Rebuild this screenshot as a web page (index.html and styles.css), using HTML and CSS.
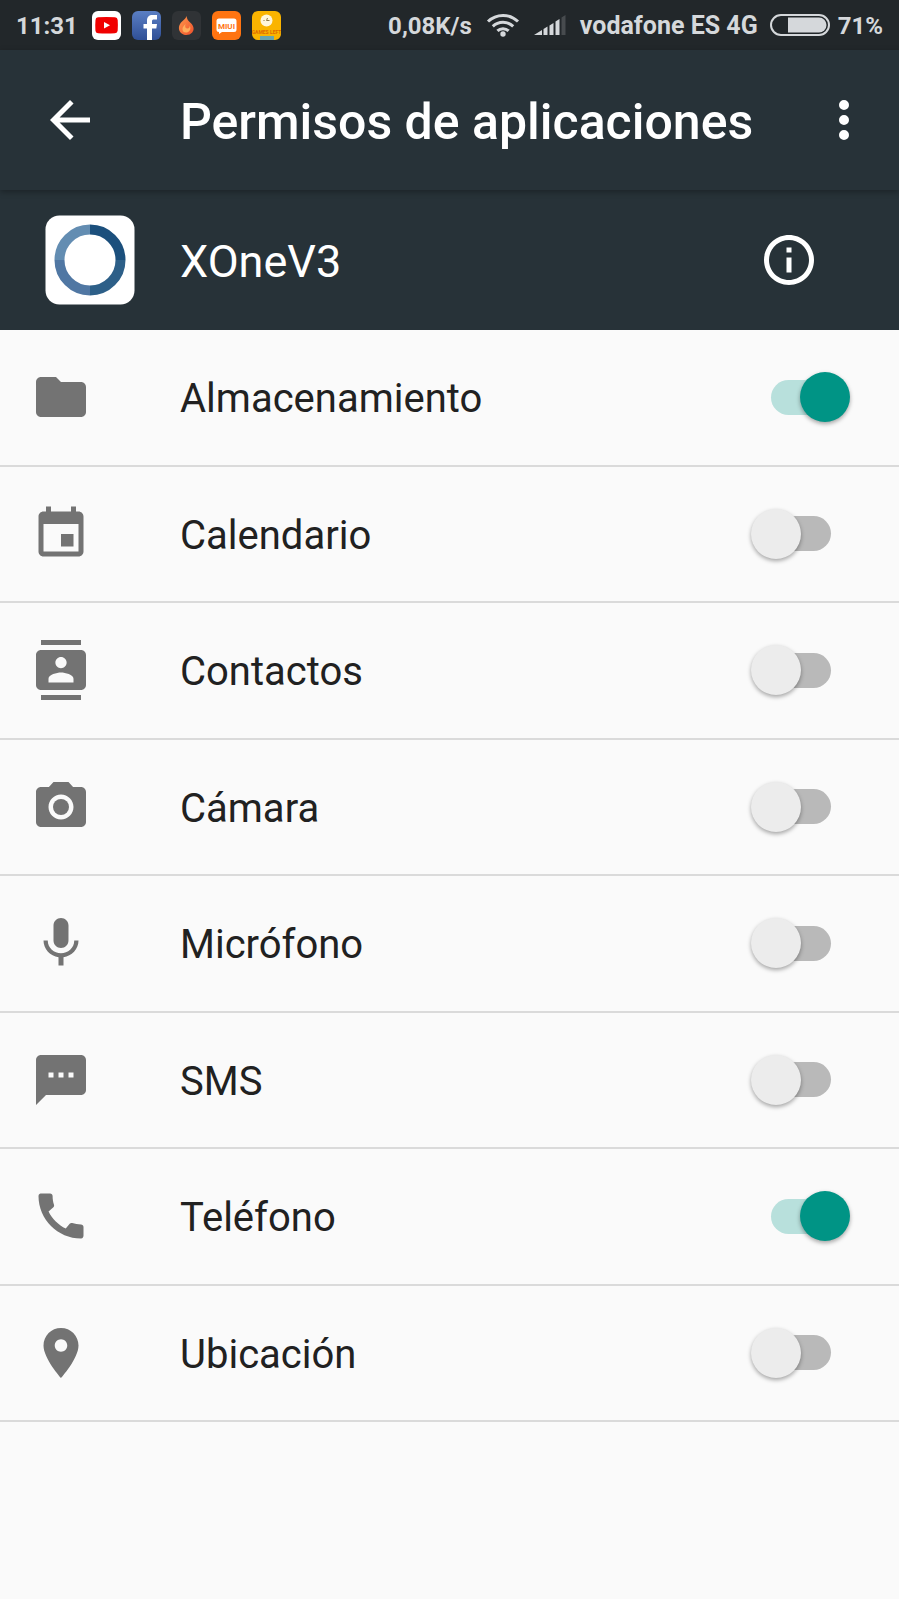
FILE: index.html
```html
<!DOCTYPE html>
<html lang="es">
<head>
<meta charset="utf-8">
<meta name="viewport" content="width=device-width, initial-scale=1">
<title>Permisos de aplicaciones</title>
<link rel="stylesheet" href="styles.css">
</head>
<body>
<div class="status-bar">
  <span class="clock">11:31</span>
  <div class="notifications">
    <svg class="notif" viewBox="0 0 29 29" aria-label="YouTube"><rect width="29" height="29" rx="6" fill="#fff"/><path d="M3.500 9q0-2.500 2.500-2.700 8.500-.6 17 0 2.500.2 2.700 2.700.4 5.500 0 10.500-.2 2.500-2.700 2.700-8.500.6-17 0Q3.500 22 3.400 19.500q-.4-5 .1-10.500z" fill="#f00000"/><path d="M12 11v6.500l6-3.200z" fill="#fff"/></svg>
    <svg class="notif" viewBox="0 0 29 29" aria-label="Facebook"><defs><linearGradient id="fb" x1="0" y1="0" x2="0" y2="1"><stop offset="0" stop-color="#5b7fc4"/><stop offset="1" stop-color="#2f4f96"/></linearGradient></defs><rect width="29" height="29" rx="6" fill="url(#fb)"/><path d="M15 29V17.500h-3.500V13H15V9.500C15 6 17 4 20.500 4H25v4.500h-3c-1.500 0-2 .6-2 2V13h5l-.7 4.500H20V29z" fill="#fff"/></svg>
    <svg class="notif" viewBox="0 0 29 29"><defs><linearGradient id="fl" x1="0" y1="0" x2="1" y2="1"><stop offset="0" stop-color="#ff9a4c"/><stop offset="1" stop-color="#f0502c"/></linearGradient></defs><rect width="29" height="29" rx="6" fill="#303336"/><path d="M14.500 5c.2 3 2 5 4.200 7 3 2.800 4 6.500 1.500 9.500-2.800 3.200-8.200 3.300-11.200.5-3-3-2.500-7.500 0-10.500 2-2.400 4.800-3.500 5.500-6.500z" fill="url(#fl)"/><path d="M13.500 13c-1 3 .2 4.500 2 4.500 1.500 0 2.300-1.300 2.200-3 1.300 2.500.8 6-2.700 7-3 .6-5-1.500-4.500-4 .3-1.800 1.600-3 3-4.500z" fill="#ffae5c"/></svg>
    <svg class="notif" viewBox="0 0 29 29"><rect width="29" height="29" rx="6" fill="#ff7411"/><path d="M7 7.500h15a2.500 2.500 0 0 1 2.500 2.500v8.500a2.500 2.500 0 0 1-2.500 2.500H10l-3 2v-2a2.500 2.500 0 0 1-2.500-2.500V10A2.500 2.500 0 0 1 7 7.500z" fill="#fff"/><text class="miui" x="14.500" y="17.500" text-anchor="middle">MIUI</text></svg>
    <svg class="notif" viewBox="0 0 29 29"><defs><clipPath id="gc"><rect width="29" height="29" rx="6"/></clipPath></defs><g clip-path="url(#gc)"><rect width="29" height="29" fill="#fab400"/><path d="M8 25h14v4H8z" fill="#68a5ad"/><circle cx="14.500" cy="9.500" r="6" fill="#fff6dc"/><path d="M15.500 7l-1 2.500h3M11.500 9.500h1" fill="none" stroke="#8f7a4a"/><text class="games" x="14.500" y="22.500" text-anchor="middle">GAMES LEFT</text></g></svg>
  </div>
  <span class="speed">0,08K/s</span>
  <svg class="wifi" viewBox="0 0 34 26" aria-label="Wi-Fi"><g fill="none" stroke="#d5d8db" stroke-width="3"><path d="M2 9.500a21.500 21.500 0 0 1 30 0"/><path d="M6.800 14.300a14.700 14.700 0 0 1 20.400 0"/><path d="M11.400 18.900a8.200 8.200 0 0 1 11.200 0"/></g><circle cx="17" cy="22" r="2.700" fill="#d5d8db"/></svg>
  <svg class="signal" viewBox="0 0 32 22" aria-label="Cobertura"><path d="M0 21l8-5v5zM9.500 15l4-2.500V21h-4zM15.500 11.500l4-2.500v12h-4zM21.500 7.500l4-2.500v16h-4z" fill="#d5d8db"/><path d="M27.500 3.500l4-2.500v20h-4z" fill="#474b4e"/></svg>
  <span class="carrier">vodafone ES 4G</span>
  <svg class="battery" viewBox="0 0 60 22" aria-label="Batería"><rect x="1" y="1" width="58" height="20" rx="10" fill="none" stroke="#d5d8db" stroke-width="2"/><path d="M18 3.500h31a7.500 7.500 0 0 1 0 15H18z" fill="#d5d8db"/></svg>
  <span class="percent">71%</span>
</div>

<header class="app-bar">
  <button class="icon-button" aria-label="Atrás"><svg class="icon" viewBox="0 0 24 24"><path d="M20 11H7.830l5.590-5.590L12 4l-8 8 8 8 1.410-1.410L7.830 13H20z"/></svg></button>
  <h1 class="title">Permisos de aplicaciones</h1>
  <button class="icon-button" aria-label="Más opciones"><svg class="icon" viewBox="0 0 24 24"><path d="M12 8a2 2 0 1 0 0-4 2 2 0 0 0 0 4zm0 2a2 2 0 1 0 0 4 2 2 0 0 0 0-4zm0 6a2 2 0 1 0 0 4 2 2 0 0 0 0-4z"/></svg></button>
</header>

<main>
  <section class="app-row">
    <svg class="app-icon" viewBox="0 0 90 90"><rect x=".5" y=".5" width="89" height="89" rx="14" fill="#fff"/><g fill="none" stroke-width="10"><path d="M45 14.500a30.500 30.500 0 0 1 30.500 30.500" stroke="#1b4f7c"/><path d="M75.500 45A30.500 30.500 0 0 1 45 75.500" stroke="#2d5f88"/><path d="M45 75.500A30.500 30.500 0 0 1 14.500 45" stroke="#5077a3"/><path d="M14.500 45A30.500 30.500 0 0 1 45 14.500" stroke="#638db2"/></g></svg>
    <h2 class="app-name">XOneV3</h2>
    <button class="icon-button" aria-label="Información"><svg class="icon" viewBox="0 0 24 24"><path d="M11 17h2v-6h-2v6zm1-15C6.480 2 2 6.480 2 12s4.480 10 10 10 10-4.480 10-10S17.520 2 12 2zm0 18c-4.410 0-8-3.590-8-8s3.590-8 8-8 8 3.590 8 8-3.590 8-8 8zM11 9h2V7h-2v2z"/></svg></button>
  </section>

  <ul class="permissions">
    <li class="permission"><svg class="icon" viewBox="0 0 24 24"><path d="M10 4H4c-1.100 0-1.990.9-1.990 2L2 18c0 1.100.9 2 2 2h16c1.100 0 2-.9 2-2V8c0-1.100-.9-2-2-2h-8l-2-2z"/></svg><label class="name" for="storage">Almacenamiento</label><input class="switch" type="checkbox" role="switch" id="storage" checked></li>
    <li class="permission"><svg class="icon" viewBox="0 0 24 24"><path d="M17 12h-5v5h5v-5zM16 1v2H8V1H6v2H5c-1.110 0-1.990.9-1.990 2L3 19c0 1.100.89 2 2 2h14c1.100 0 2-.9 2-2V5c0-1.100-.9-2-2-2h-1V1h-2zm3 18H5V8h14v11z"/></svg><label class="name" for="calendar">Calendario</label><input class="switch" type="checkbox" role="switch" id="calendar"></li>
    <li class="permission"><svg class="icon" viewBox="0 0 24 24"><path d="M20 0H4v2h16V0zM4 24h16v-2H4v2zM20 4H4c-1.100 0-2 .9-2 2v12c0 1.100.9 2 2 2h16c1.100 0 2-.9 2-2V6c0-1.100-.9-2-2-2zm-8 2.750c1.240 0 2.250 1.010 2.250 2.250s-1.010 2.250-2.250 2.250S9.750 10.240 9.750 9 10.760 6.750 12 6.750zM17 17H7v-1.500c0-1.670 3.330-2.500 5-2.500s5 .83 5 2.500V17z"/></svg><label class="name" for="contacts">Contactos</label><input class="switch" type="checkbox" role="switch" id="contacts"></li>
    <li class="permission"><svg class="icon" viewBox="0 0 24 24"><circle cx="12" cy="12" r="3.200"/><path d="M9 2L7.170 4H4c-1.100 0-2 .9-2 2v12c0 1.100.9 2 2 2h16c1.100 0 2-.9 2-2V6c0-1.100-.9-2-2-2h-3.170L15 2H9zm3 15c-2.760 0-5-2.240-5-5s2.240-5 5-5 5 2.240 5 5-2.240 5-5 5z"/></svg><label class="name" for="camera">Cámara</label><input class="switch" type="checkbox" role="switch" id="camera"></li>
    <li class="permission"><svg class="icon" viewBox="0 0 24 24"><path d="M12 14c1.660 0 2.990-1.340 2.990-3L15 5c0-1.660-1.340-3-3-3S9 3.340 9 5v6c0 1.660 1.340 3 3 3zm5.300-3c0 3-2.540 5.100-5.300 5.100S6.700 14 6.700 11H5c0 3.410 2.720 6.230 6 6.720V21h2v-3.280c3.280-.48 6-3.300 6-6.720h-1.700z"/></svg><label class="name" for="mic">Micrófono</label><input class="switch" type="checkbox" role="switch" id="mic"></li>
    <li class="permission"><svg class="icon" viewBox="0 0 24 24"><path d="M20 2H4c-1.100 0-1.990.9-1.990 2L2 22l4-4h14c1.100 0 2-.9 2-2V4c0-1.100-.9-2-2-2zM9 11H7V9h2v2zm4 0h-2V9h2v2zm4 0h-2V9h2v2z"/></svg><label class="name" for="sms">SMS</label><input class="switch" type="checkbox" role="switch" id="sms"></li>
    <li class="permission"><svg class="icon" viewBox="0 0 24 24"><path d="M20.010 15.380c-1.230 0-2.420-.2-3.530-.56-.35-.12-.74-.03-1.010.24l-1.570 1.970c-2.830-1.350-5.480-3.900-6.890-6.830l1.950-1.660c.27-.28.35-.67.24-1.020-.37-1.110-.56-2.300-.56-3.530 0-.54-.45-.99-.99-.99H4.190C3.650 3 3 3.240 3 3.990 3 13.280 10.730 21 20.010 21c.71 0 .99-.63.99-1.180v-3.450c0-.54-.45-.99-.99-.99z"/></svg><label class="name" for="phone">Teléfono</label><input class="switch" type="checkbox" role="switch" id="phone" checked></li>
    <li class="permission"><svg class="icon" viewBox="0 0 24 24"><path d="M12 2C8.130 2 5 5.130 5 9c0 5.250 7 13 7 13s7-7.750 7-13c0-3.870-3.130-7-7-7zm0 9.500c-1.380 0-2.500-1.120-2.500-2.500s1.120-2.500 2.500-2.500 2.500 1.120 2.500 2.500-1.120 2.500-2.500 2.500z"/></svg><label class="name" for="location">Ubicación</label><input class="switch" type="checkbox" role="switch" id="location"></li>
  </ul>
</main>
</body>
</html>
```
FILE: styles.css
```css
* {
  box-sizing: border-box;
}

body {
  margin: 0;
  min-height: 100vh;
  background: #fafafa;
  color: #212121;
  font-family: Roboto, "Noto Sans", sans-serif;
}

svg {
  display: block;
  flex: none;
}

.status-bar {
  display: flex;
  align-items: center;
  height: 50px;
  padding: 0 16px;
  background: #22272a;
  color: #d5d8db;
  font-size: 24px;
  font-weight: 700;
  line-height: 48px;
  white-space: nowrap;
}

.status-bar span {
  padding-top: 2px;
}

.notifications {
  display: flex;
  gap: 11px;
  margin-left: 14px;
}

.notif {
  width: 29px;
  height: 29px;
}

.miui {
  fill: #ff7411;
  font-size: 8px;
  font-weight: 700;
}

.games {
  fill: #e06a00;
  font-size: 5px;
  font-weight: 700;
}

.speed {
  margin-left: auto;
}

.wifi {
  width: 34px;
  height: 26px;
  margin-left: 14px;
}

.signal {
  width: 32px;
  height: 22px;
  margin-left: 14px;
}

.carrier {
  margin-left: 14px;
  font-size: 25px;
}

.battery {
  width: 60px;
  height: 22px;
  margin: 0 8px 0 12px;
}

.app-bar,
.app-row {
  display: flex;
  align-items: center;
  height: 140px;
  background: #273238;
  color: #fff;
}

.app-bar {
  position: relative;
  padding: 0 25px 0 40px;
  box-shadow: 0 2px 6px rgba(0, 0, 0, 0.3);
}

.icon-button {
  flex: none;
  padding: 0;
  border: 0;
  background: none;
  color: inherit;
}

.icon {
  width: 60px;
  height: 60px;
  fill: currentColor;
}

.title {
  flex: 1;
  margin: 0 0 0 80px;
  padding-top: 4px;
  font-size: 50px;
  font-weight: 500;
  line-height: 60px;
  white-space: nowrap;
}

.app-row {
  padding: 0 80px 0 45px;
}

.app-icon {
  width: 90px;
  height: 90px;
}

.app-name {
  flex: 1;
  margin: 0 0 0 45px;
  padding-top: 4px;
  font-size: 45px;
  font-weight: 400;
  line-height: 56px;
}

.permissions {
  display: grid;
  grid-auto-rows: 1fr;
  min-height: 1092px;
  margin: 0;
  padding: 0;
  list-style: none;
}

.permission {
  display: flex;
  align-items: center;
  padding: 0 49px 0 31px;
  border-bottom: 2px solid #dadada;
}

.permission .icon {
  color: #737373;
}

.name {
  flex: 1;
  margin-left: 89px;
  padding-top: 4px;
  font-size: 40px;
  line-height: 48px;
}

.switch {
  display: grid;
  flex: none;
  align-items: center;
  width: 99px;
  height: 50px;
  margin: 0;
  appearance: none;
}

.switch::before,
.switch::after {
  grid-area: 1 / 1;
  content: "";
}

.switch::before {
  justify-self: center;
  width: 60px;
  height: 35px;
  border-radius: 18px;
  background: #b9b9b9;
}

.switch::after {
  width: 50px;
  height: 50px;
  border-radius: 50%;
  background: #ececec;
  box-shadow: 0 2px 4px rgba(0, 0, 0, 0.35);
}

.switch:checked::before {
  background: #b8e0dc;
}

.switch:checked::after {
  justify-self: end;
  background: #009485;
}
```
